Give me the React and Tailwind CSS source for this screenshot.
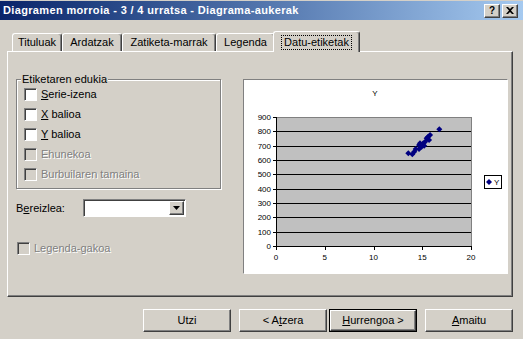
import React from "react";

const raised =
  "border border-t-white border-l-white border-r-[#404040] border-b-[#404040] shadow-[inset_-1px_-1px_0_#808080]";
const sunken =
  "border border-t-[#808080] border-l-[#808080] border-r-white border-b-white shadow-[inset_1px_1px_0_#404040]";
const disabledText = "text-[#808080] [text-shadow:1px_1px_0_#fff]";

// pisteak (x, y)
const points = [
  [13.57, 647], [13.98, 640], [14.18, 658], [14.33, 677], [14.67, 705],
  [14.67, 677], [14.77, 716], [14.94, 693], [15.1, 716], [15.2, 700],
  [15.3, 728], [15.45, 751], [15.6, 763], [15.7, 740], [15.8, 774],
  [16.75, 814],
];

function Checkbox({ label, accel, disabled, className = "" }) {
  return (
    <div className={`flex items-center gap-[4px] h-[20px] ${className}`}>
      <div
        className={`w-[13px] h-[13px] shrink-0 ${sunken} ${
          disabled ? "bg-[#d4d0c8]" : "bg-white"
        }`}
      />
      <span className={disabled ? disabledText : ""}>
        {accel ? (
          <>
            <span className="underline">{label[0]}</span>
            {label.slice(1)}
          </>
        ) : (
          label
        )}
      </span>
    </div>
  );
}

function Tab({ children, width, selected }) {
  if (selected) {
    return (
      <div
        className={`relative z-10 -ml-[2px] -mb-[1px] h-[21px] ${width} bg-[#d4d0c8] rounded-t-[3px] border-t border-l border-t-white border-l-white border-r border-r-[#404040] shadow-[inset_-1px_0_0_#808080] flex items-start justify-center pt-[3px]`}
      >
        <span className="border border-dotted border-black px-[2px] leading-[13px]">
          {children}
        </span>
      </div>
    );
  }
  return (
    <div
      className={`h-[18px] ${width} rounded-t-[3px] border-t border-l border-t-white border-l-white border-r border-r-[#404040] shadow-[inset_-1px_0_0_#808080] flex items-center justify-center`}
    >
      {children}
    </div>
  );
}

function Button({ children, isDefault }) {
  return (
    <div
      className={`w-[88px] h-[23px] ${
        isDefault ? "border border-black" : ""
      } flex`}
    >
      <div className={`flex-1 ${raised} flex items-center justify-center`}>
        {children}
      </div>
    </div>
  );
}

function Chart() {
  const L = 32, R = 227, T = 37, B = 166;
  const sx = (v) => L + (v / 20) * (R - L);
  const sy = (v) => B - (v / 900) * (B - T);
  const ys = [0, 100, 200, 300, 400, 500, 600, 700, 800, 900];
  const xs = [0, 5, 10, 15, 20];
  return (
    <svg
      width="263"
      height="193"
      className="font-['Liberation_Sans',Arial,sans-serif]"
    >
      <text x="131" y="16" fontSize="8" textAnchor="middle">Y</text>
      <rect
        x={L + 0.5}
        y={T + 0.5}
        width={R - L}
        height={B - T}
        fill="#c0c0c0"
        stroke="#808080"
        shapeRendering="crispEdges"
      />
      {ys.map((v) => (
        <g key={v} shapeRendering="crispEdges">
          {v > 0 && v < 900 && (
            <line x1={L} x2={R} y1={Math.round(sy(v)) + 0.5} y2={Math.round(sy(v)) + 0.5} stroke="#000" />
          )}
          <line x1={L - 3} x2={L} y1={Math.round(sy(v)) + 0.5} y2={Math.round(sy(v)) + 0.5} stroke="#000" />
          <text x={L - 5} y={Math.round(sy(v)) + 3} fontSize="8" textAnchor="end">
            {v}
          </text>
        </g>
      ))}
      <line x1={L + 0.5} x2={L + 0.5} y1={T} y2={B + 1} stroke="#000" shapeRendering="crispEdges" />
      <line x1={L} x2={R + 1} y1={B + 0.5} y2={B + 0.5} stroke="#000" shapeRendering="crispEdges" />
      {xs.map((v) => (
        <g key={v}>
          <line
            x1={Math.round(sx(v)) + 0.5}
            x2={Math.round(sx(v)) + 0.5}
            y1={B}
            y2={B + 4}
            stroke="#000"
            shapeRendering="crispEdges"
          />
          <text x={sx(v)} y="180" fontSize="8" textAnchor="middle">
            {v}
          </text>
        </g>
      ))}
      {points.map(([x, y], i) => {
        const cx = sx(x), cy = sy(y);
        return (
          <polygon
            key={i}
            points={`${cx},${cy - 3} ${cx + 3},${cy} ${cx},${cy + 3} ${cx - 3},${cy}`}
            fill="#000080"
          />
        );
      })}
      <rect x="240.5" y="95.5" width="17" height="13" fill="#fff" stroke="#000" shapeRendering="crispEdges" />
      <polygon points="245,99 248,102 245,105 242,102" fill="#000080" />
      <text x="250" y="105" fontSize="8">Y</text>
    </svg>
  );
}

export default function App() {
  return (
    <div className="w-[523px] h-[339px] bg-[#d4d0c8] flex flex-col font-['Liberation_Sans',Arial,sans-serif] text-[11px] text-black overflow-hidden select-none">
      {/* titulu barra */}
      <div className="mt-[1px] h-[19px] bg-linear-to-r from-[#0a246a] to-[#a6caf0] flex items-center pl-[3px] pr-[5px]">
        <span className="text-white font-bold text-[11px] tracking-[0.35px]">
          Diagramen morroia - 3 / 4 urratsa - Diagrama-aukerak
        </span>
        <div className="ml-auto flex gap-[2px]">
          <div className={`w-[16px] h-[14px] bg-[#d4d0c8] ${raised} flex items-center justify-center font-bold text-[10px] leading-none`}>
            ?
          </div>
          <div className={`w-[16px] h-[14px] bg-[#d4d0c8] ${raised} flex items-center justify-center`}>
            <svg width="8" height="7" viewBox="0 0 8 7">
              <path d="M0 0h2l2 2 2-2h2L5 3.5 8 7H6L4 5 2 7H0l3-3.5z" fill="#000" />
            </svg>
          </div>
        </div>
      </div>

      {/* fitxak */}
      <div className="mt-[11px] h-[20px] flex items-end pl-[12px]">
        <Tab width="w-[50px]">Tituluak</Tab>
        <Tab width="w-[60px]">Ardatzak</Tab>
        <Tab width="w-[94px]">Zatiketa-marrak</Tab>
        <Tab width="w-[59px]">Legenda</Tab>
        <Tab width="w-[87px]" selected>
          Datu-etiketak
        </Tab>
      </div>

      {/* panela */}
      <div className="ml-[7px] w-[506px] h-[246px] border border-t-white border-l-white border-r-[#404040] border-b-[#404040] shadow-[inset_-1px_-1px_0_#808080] flex pt-[27px] pl-[8px]">
        <div className="w-[205px] flex flex-col">
          <div className="relative h-[110px] border border-[#808080] shadow-[inset_1px_1px_0_#fff,1px_1px_0_#fff] pt-[4px] pl-[7px]">
            <span className="absolute -top-[8px] left-[4px] bg-[#d4d0c8] px-[1px] leading-[14px]">
              Etiketaren edukia
            </span>
            <Checkbox label="Serie-izena" accel />
            <Checkbox label="X balioa" accel />
            <Checkbox label="Y balioa" accel />
            <Checkbox label="Ehunekoa" disabled />
            <Checkbox label="Burbuilaren tamaina" disabled />
          </div>

          <div className="mt-[10px] flex items-center h-[18px]">
            <span className="w-[67px]">
              B<span className="underline">e</span>reizlea:
            </span>
            <div className={`w-[103px] h-[18px] bg-white ${sunken} flex justify-end p-[1px]`}>
              <div className={`w-[15px] h-full bg-[#d4d0c8] ${raised} flex items-center justify-center`}>
                <svg width="7" height="4" viewBox="0 0 7 4">
                  <path d="M0 0h7L3.5 4z" fill="#000" />
                </svg>
              </div>
            </div>
          </div>

          <Checkbox label="Legenda-gakoa" disabled className="mt-[21px] ml-[1px] gap-[2px]" />
        </div>

        <div className={`ml-[22px] w-[265px] h-[195px] bg-white border border-t-[#808080] border-l-[#808080] border-r-white border-b-white`}>
          <Chart />
        </div>
      </div>

      {/* botoiak */}
      <div className="mt-[12px] flex pl-[143px]">
        <Button>Utzi</Button>
        <div className="ml-[8px]">
          <Button>
            &lt; A<span className="underline">t</span>zera
          </Button>
        </div>
        <div className="ml-[2px]">
          <Button isDefault>
            <span className="underline">H</span>urrengoa &gt;
          </Button>
        </div>
        <div className="ml-[8px]">
          <Button>
            <span className="underline">A</span>maitu
          </Button>
        </div>
      </div>
    </div>
  );
}
